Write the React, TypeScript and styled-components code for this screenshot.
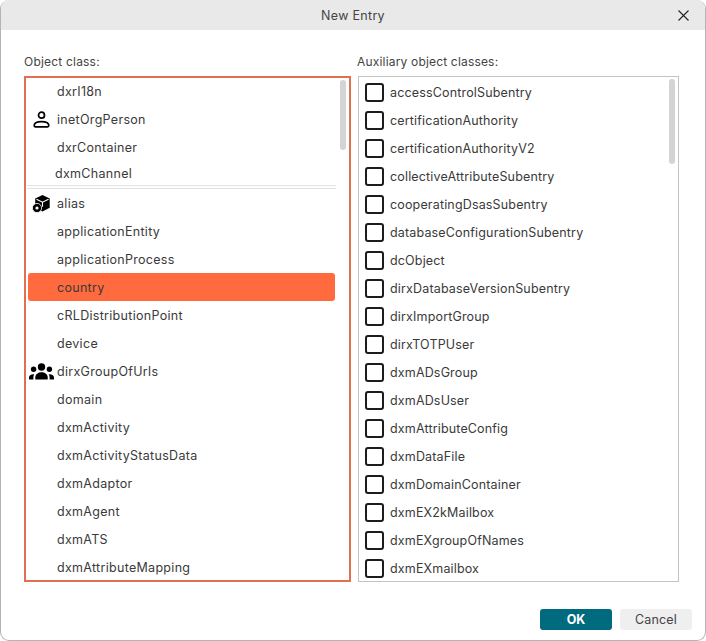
import React from 'react'
import styled, { createGlobalStyle } from 'styled-components'

const objectClasses: { name: string; icon?: 'alias' | 'group'; selected?: boolean }[] = [
  { name: 'alias', icon: 'alias' },
  { name: 'applicationEntity' },
  { name: 'applicationProcess' },
  { name: 'country', selected: true },
  { name: 'cRLDistributionPoint' },
  { name: 'device' },
  { name: 'dirxGroupOfUrls', icon: 'group' },
  { name: 'domain' },
  { name: 'dxmActivity' },
  { name: 'dxmActivityStatusData' },
  { name: 'dxmAdaptor' },
  { name: 'dxmAgent' },
  { name: 'dxmATS' },
  { name: 'dxmAttributeMapping' },
]

const auxiliaryClasses = [
  'accessControlSubentry',
  'certificationAuthority',
  'certificationAuthorityV2',
  'collectiveAttributeSubentry',
  'cooperatingDsasSubentry',
  'databaseConfigurationSubentry',
  'dcObject',
  'dirxDatabaseVersionSubentry',
  'dirxImportGroup',
  'dirxTOTPUser',
  'dxmADsGroup',
  'dxmADsUser',
  'dxmAttributeConfig',
  'dxmDataFile',
  'dxmDomainContainer',
  'dxmEX2kMailbox',
  'dxmEXgroupOfNames',
  'dxmEXmailbox',
]

const PersonIcon = () => (
  <svg width="17" height="17" viewBox="0 0 17 17" fill="none" stroke="#000" strokeWidth="1.7">
    <circle cx="8.5" cy="4.2" r="3" />
    <path d="M1.2 14.6c0-2.6 3.4-4 7.3-4s7.3 1.4 7.3 4c0 .8-.4 1.2-1.2 1.2H2.4c-.8 0-1.2-.4-1.2-1.2z" />
  </svg>
)

const AliasIcon = () => (
  <svg width="18" height="18" viewBox="0 0 18 18">
    <path d="M10.5 0l7.2 3.6v9.2L10.5 16.6 3.2 12.8V3.6z" fill="#000" />
    <path d="M4.5 4.2L10.5 7.2l6-3M10.5 7.2v4.6" fill="none" stroke="#fff" strokeWidth="1.1" />
    <circle cx="5" cy="13" r="4.6" fill="#000" stroke="#fff" strokeWidth="0.8" />
    <circle cx="5" cy="13" r="1.6" fill="#fff" />
  </svg>
)

const GroupIcon = () => (
  <svg width="25" height="17" viewBox="0 0 25 17" fill="#000">
    <circle cx="12.5" cy="4" r="3.7" />
    <circle cx="4.6" cy="6.2" r="2.7" />
    <circle cx="20.4" cy="6.2" r="2.7" />
    <path d="M6.3 16.6v-2.4c0-3 3-5 6.2-5s6.2 2 6.2 5v2.4z" />
    <path d="M0 16.6v-2c0-2.2 1.9-3.6 5.2-3.4-.5.9-.8 1.9-.8 3v2.4z" />
    <path d="M25 16.6v-2c0-2.2-1.9-3.6-5.2-3.4.5.9.8 1.9.8 3v2.4z" />
  </svg>
)

const CloseIcon = () => (
  <svg width="11" height="11" viewBox="0 0 11 11" stroke="#222" strokeWidth="1.1">
    <path d="M0.5 0.5l10 10M10.5 0.5l-10 10" />
  </svg>
)

export default function App() {
  return (
    <>
      <GlobalStyle />
      <Dialog>
        <TitleBar>
          New Entry
          <CloseButton>
            <CloseIcon />
          </CloseButton>
        </TitleBar>
        <Content>
          <ObjectColumn>
            <FieldLabel>Object class:</FieldLabel>
            <ObjectList>
              <ObjectRows>
                <ObjectRow>
                  <IconSlot />
                  dxrI18n
                </ObjectRow>
                <ObjectRow>
                  <IconSlot>
                    <PersonIcon />
                  </IconSlot>
                  inetOrgPerson
                </ObjectRow>
                <ObjectRow>
                  <IconSlot />
                  dxrContainer
                </ObjectRow>
                <PinnedRow>dxmChannel</PinnedRow>
                <Separator />
                {objectClasses.map(item => (
                  <ObjectRow key={item.name} $selected={item.selected}>
                    <IconSlot>
                      {item.icon === 'alias' && <AliasIcon />}
                      {item.icon === 'group' && <GroupIcon />}
                    </IconSlot>
                    {item.name}
                  </ObjectRow>
                ))}
              </ObjectRows>
              <ScrollThumb $height={70} />
            </ObjectList>
          </ObjectColumn>
          <AuxColumn>
            <AuxLabel>Auxiliary object classes:</AuxLabel>
            <AuxList>
              {auxiliaryClasses.map(name => (
                <AuxRow key={name}>
                  <CheckBox />
                  {name}
                </AuxRow>
              ))}
              <ScrollThumb $height={85} />
            </AuxList>
          </AuxColumn>
        </Content>
        <Footer>
          <OkButton>OK</OkButton>
          <CancelButton>Cancel</CancelButton>
        </Footer>
      </Dialog>
    </>
  )
}

const GlobalStyle = createGlobalStyle`
  html, body {
    margin: 0;
    padding: 0;
    background: #fff;
  }
  * {
    box-sizing: border-box;
  }
`

const Dialog = styled.div`
  width: 706px;
  height: 641px;
  display: flex;
  flex-direction: column;
  background: #fff;
  border: 1px solid #b4b4b4;
  border-top: none;
  border-radius: 9px;
  overflow: hidden;
  font-family: 'Inter', 'Open Sans', sans-serif;
  font-size: 12.5px;
  color: #3a3a3a;
`

const TitleBar = styled.div`
  position: relative;
  height: 30px;
  flex: none;
  display: flex;
  align-items: center;
  justify-content: center;
  padding-top: 1px;
  background: #e9e9e9;
  font-size: 12.5px;
  letter-spacing: 0.3px;
  color: #444;
`

const CloseButton = styled.div`
  position: absolute;
  right: 16px;
  top: 10px;
  display: flex;
`

const Content = styled.div`
  flex: none;
  display: flex;
  gap: 7px;
  padding: 24px 26px 0 23px;
`

const ObjectColumn = styled.div`
  width: 327px;
  display: flex;
  flex-direction: column;
`

const AuxColumn = styled.div`
  width: 321px;
  display: flex;
  flex-direction: column;
`

const FieldLabel = styled.div`
  height: 22px;
  line-height: 16px;
  font-size: 12px;
  letter-spacing: 0.2px;
  color: #444;
`

const AuxLabel = styled(FieldLabel)`
  margin-left: -1px;
  letter-spacing: 0.18px;
`

const ObjectList = styled.div`
  position: relative;
  height: 506px;
  flex: none;
  border: 2px solid #e0704f;
  overflow: hidden;
  padding: 0 14px 0 2px;
`

const ObjectRows = styled.div`
  margin-top: -1px;
`

const ObjectRow = styled.div<{ $selected?: boolean }>`
  height: 28px;
  display: flex;
  align-items: center;
  padding-top: 1px;
  border-radius: 3px;
  letter-spacing: 0.3px;
  background: ${p => (p.$selected ? '#ff6b3f' : 'transparent')};
`

const PinnedRow = styled.div`
  height: 24px;
  display: flex;
  align-items: center;
  padding: 1px 0 0 27px;
  letter-spacing: 0.3px;
`

const Separator = styled.div`
  height: 4px;
  margin: 0 -1px;
  border-top: 1px solid #e2e2e2;
  border-bottom: 1px solid #e2e2e2;
`

const IconSlot = styled.div`
  width: 29px;
  flex: none;
  display: flex;
  justify-content: center;
  padding-right: 3px;
`

const AuxList = styled.div`
  position: relative;
  height: 506px;
  flex: none;
  border: 1px solid #c4c4c4;
  overflow: hidden;
  padding: 1px 0 0 6px;
`

const AuxRow = styled.div`
  height: 28px;
  display: flex;
  align-items: center;
  gap: 6px;
  padding-top: 1px;
  letter-spacing: 0.16px;
`

const CheckBox = styled.div`
  width: 19px;
  height: 19px;
  flex: none;
  border: 2px solid #1c1c1c;
  border-radius: 3px;
  background: #fff;
`

const ScrollThumb = styled.div<{ $height: number }>`
  position: absolute;
  top: 2px;
  right: 3px;
  width: 6px;
  height: ${p => p.$height}px;
  border-radius: 3px;
  background: #d4d4d4;
`

const Footer = styled.div`
  height: 58px;
  flex: none;
  display: flex;
  justify-content: flex-end;
  gap: 8px;
  padding: 27px 13px 0 0;
`

const OkButton = styled.div`
  width: 72px;
  height: 21px;
  display: flex;
  align-items: center;
  justify-content: center;
  border-radius: 3px;
  background: #006a7f;
  color: #fff;
  font-weight: 700;
`

const CancelButton = styled.div`
  width: 72px;
  height: 21px;
  display: flex;
  align-items: center;
  justify-content: center;
  border-radius: 3px;
  background: #efefef;
  color: #444;
  letter-spacing: 0.2px;
`
